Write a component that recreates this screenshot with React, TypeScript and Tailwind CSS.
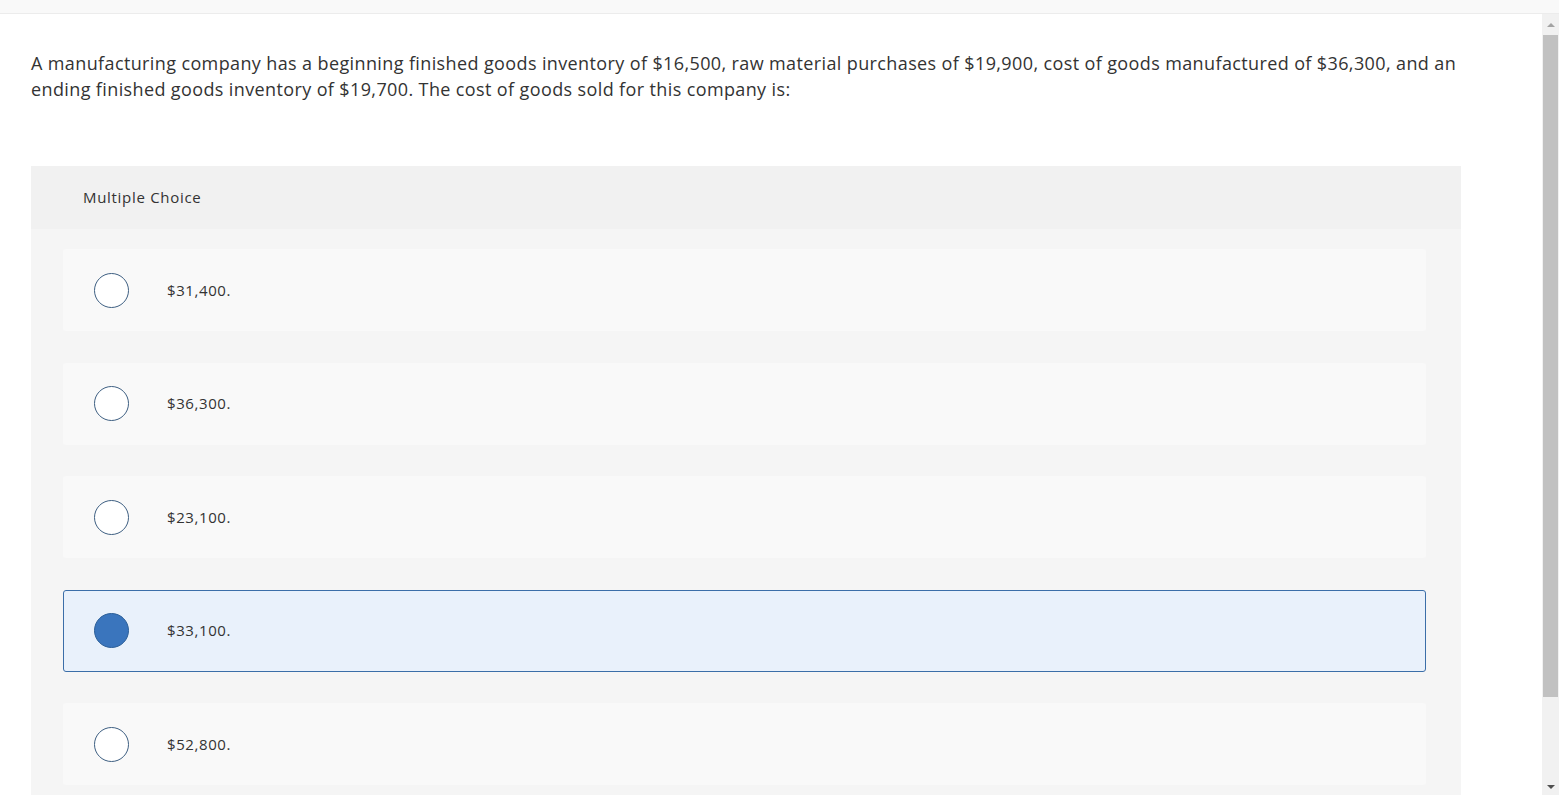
import React from "react";

const options = [
  { label: "$31,400.", selected: false },
  { label: "$36,300.", selected: false },
  { label: "$23,100.", selected: false },
  { label: "$33,100.", selected: true },
  { label: "$52,800.", selected: false },
];

export default function App() {
  return (
    <div
      className="h-[811px] w-full overflow-hidden bg-white flex flex-col text-[#333333]"
      style={{ fontFamily: "'Open Sans', Lato, sans-serif" }}
    >
      <div className="h-[14px] bg-[#f9f9f9] border-b border-[#ececec] shrink-0" />
      <div className="flex h-[781px] shrink-0">
        <div className="flex-1 overflow-hidden pl-[31px] pt-[36px]">
          <div className="w-[1430px]">
            <p className="text-[18px] leading-[26px] tracking-[0.38px] text-[#333333]">
              A manufacturing company has a beginning finished goods inventory of $16,500, raw material purchases of $19,900, cost of goods manufactured of $36,300, and an ending finished goods inventory of $19,700. The cost of goods sold for this company is:
            </p>
            <div className="mt-[64px]">
              <div className="h-[63px] bg-[#f1f1f1] pl-[52px] flex items-center text-[15px] tracking-[0.7px] text-[#333333]">
                Multiple Choice
              </div>
              <div className="bg-[#f5f5f5] pl-[32px] pr-[35px] pt-[20px] pb-[20px] flex flex-col gap-[31.5px]">
                {options.map((o) => (
                  <div
                    key={o.label}
                    className={
                      o.selected
                        ? "h-[82px] rounded-[3px] bg-[#e9f1fb] border border-[#3b6ea8] flex items-center pl-[30px]"
                        : "h-[82px] rounded-[3px] bg-[#f9f9f9] flex items-center pl-[31px]"
                    }
                  >
                    {o.selected ? (
                      <div className="w-[35px] h-[35px] rounded-full bg-[#3a75bd] border border-[#2c5f98] shrink-0" />
                    ) : (
                      <div className="w-[35px] h-[35px] rounded-full bg-white border-[1.5px] border-[#3e5f82] shrink-0" />
                    )}
                    <span className="ml-[38px] text-[15px] tracking-[0.6px] text-[#333333]">{o.label}</span>
                  </div>
                ))}
              </div>
            </div>
          </div>
        </div>
        <div className="w-[17px] shrink-0 bg-[#f1f1f1] flex flex-col">
          <div className="h-[21px] flex items-center justify-center">
            <div className="w-0 h-0 border-l-[4px] border-r-[4px] border-b-[4px] border-l-transparent border-r-transparent border-b-[#a3a3a3]" />
          </div>
          <div className="h-[662px] mx-[1px] bg-[#c1c1c1]" />
          <div className="flex-1" />
          <div className="h-[17px] flex items-center justify-center">
            <div className="w-0 h-0 border-l-[4px] border-r-[4px] border-t-[4px] border-l-transparent border-r-transparent border-t-[#505050]" />
          </div>
        </div>
      </div>
    </div>
  );
}
